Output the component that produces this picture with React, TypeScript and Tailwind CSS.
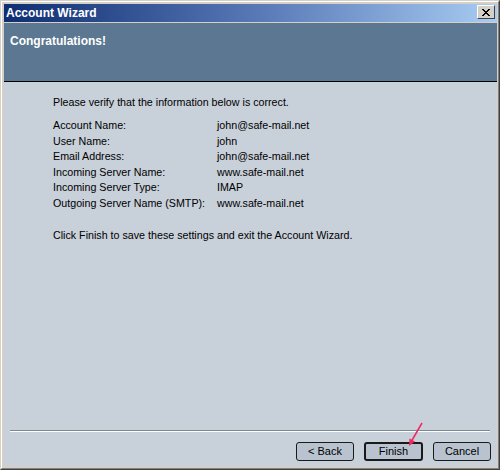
import React from 'react';

const rows: [string, string][] = [
  ['Account Name:', 'john@safe-mail.net'],
  ['User Name:', 'john'],
  ['Email Address:', 'john@safe-mail.net'],
  ['Incoming Server Name:', 'www.safe-mail.net'],
  ['Incoming Server Type:', 'IMAP'],
  ['Outgoing Server Name (SMTP):', 'www.safe-mail.net'],
];

const WizardButton: React.FC<{ label: string; isDefault?: boolean }> = ({ label, isDefault }) => (
  <button
    className={
      isDefault
        ? 'w-[59px] h-[19px] rounded-[3px] border-2 border-[#1a1a1a] bg-[#b9c3cf] text-[11px] leading-none text-black flex items-center justify-center'
        : 'w-[58px] h-[19px] rounded-[3px] border border-[#1a1a1a] bg-[#b9c3cf] text-[11px] leading-none text-black flex items-center justify-center'
    }
  >
    {label}
  </button>
);

export default function App() {
  return (
    <div
      className="relative w-[500px] h-[470px] bg-[#d4d0c8] border border-t-[#d4d0c8] border-l-[#d4d0c8] border-r-[#404040] border-b-[#404040]"
      style={{ fontFamily: '"Liberation Sans", Arial, sans-serif' }}
    >
      <div className="w-full h-full border border-t-white border-l-white border-r-[#808080] border-b-[#808080] pt-[2px] pl-[2px] pr-[1px] pb-[2px] flex flex-col">
        {/* title bar */}
        <div className="h-[18px] flex justify-between bg-gradient-to-r from-[#0f2e72] via-[#5676b4] to-[#a8ccf2]">
          <div className="pl-[2px] text-[12px] font-bold text-white leading-[18px]">Account Wizard</div>
          <button className="mt-[1px] mr-[2px] w-[18px] h-[14px] bg-[#d4d0c8] border border-t-white border-l-white border-r-[#404040] border-b-[#404040] flex items-center justify-center">
            <svg width="8" height="7" viewBox="0 0 8 7">
              <path d="M0 0h2v1h1v1h2v-1h1v-1h2v1h-1v1h-1v1h-1v1h1v1h1v1h1v1h-2v-1h-1v-1h-2v1h-1v1h-2v-1h1v-1h1v-1h1v-1h-1v-1h-1v-1h-1z" fill="#000" />
            </svg>
          </button>
        </div>
        <div className="h-[1px] bg-[#d4d0c8]" />

        {/* header */}
        <div className="h-[59px] bg-[#5b7791] border-b border-black pl-[6px] pt-[10px]">
          <div className="text-[12px] font-bold text-white leading-[16px]">Congratulations!</div>
        </div>

        {/* body */}
        <div className="flex-1 bg-[#c8d0da] flex flex-col text-[10.7px] text-black">
          <div className="pl-[49px] pt-[12px]">
            <div className="leading-[16px]">Please verify that the information below is correct.</div>
            <div className="mt-[8px]">
              {rows.map(([label, value]) => (
                <div key={label} className="flex leading-[15.6px]">
                  <div className="w-[164px]">{label}</div>
                  <div>{value}</div>
                </div>
              ))}
            </div>
            <div className="mt-[15px] leading-[16px]">Click Finish to save these settings and exit the Account Wizard.</div>
          </div>

          <div className="flex-1" />

          <div className="ml-[6px] mr-[7px] h-[2px] border-t border-[#7c8894] border-b border-b-white" />

          <div className="flex justify-end gap-[10px] pr-[6px] pt-[10px] pb-[5px]">
            <WizardButton label="< Back" />
            <WizardButton label="Finish" isDefault />
            <WizardButton label="Cancel" />
          </div>
        </div>
      </div>

      {/* pointer arrow over Finish */}
      <svg className="absolute left-[400px] top-[418px]" width="26" height="30" viewBox="0 0 26 30">
        <line x1="21" y1="4" x2="10" y2="23" stroke="#ee2a62" strokeWidth="1.5" />
        <path d="M8 27 L8.5 19.5 L14 22.5 Z" fill="#ee2a62" />
      </svg>
    </div>
  );
}
